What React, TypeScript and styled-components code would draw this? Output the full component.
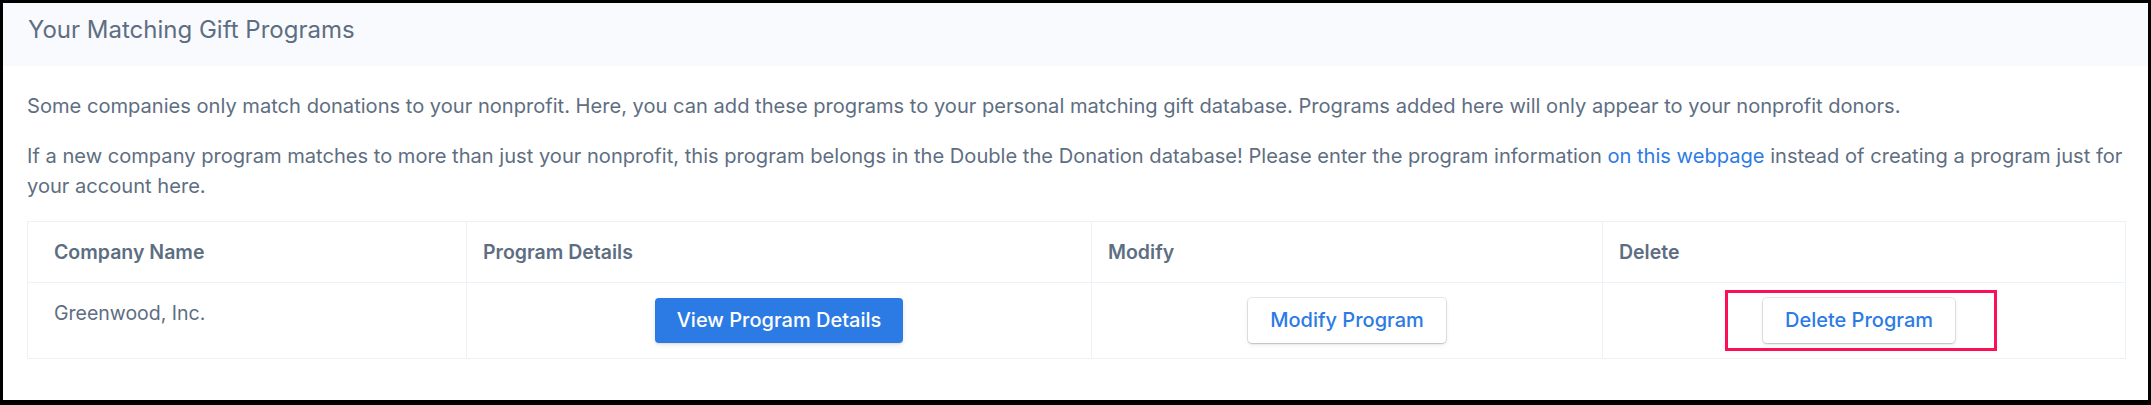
import * as React from "react";
import styled, { createGlobalStyle } from "styled-components";

const GlobalStyle = createGlobalStyle`
  html, body {
    margin: 0;
    padding: 0;
    background: #fff;
  }
  body {
    font-family: Inter, "Noto Sans", "Liberation Sans", sans-serif;
    color: #5e6e82;
  }
`;

const Frame = styled.div`
  width: 2151px;
  height: 405px;
  box-sizing: border-box;
  border: 3px solid #000;
  border-bottom-width: 5px;
  background: #fff;
`;

const CardHeader = styled.div`
  height: 63px;
  box-sizing: border-box;
  padding: 13px 25px 0;
  background: #f9fafd;
`;

const Title = styled.h5`
  margin: 0;
  font-size: 24px;
  line-height: 1.2;
  font-weight: 400;
  color: #5e6e82;
`;

const CardBody = styled.div`
  padding: 25px 24px 0;
`;

const Text = styled.p`
  margin: 0 0 20px;
  font-size: 20.1px;
  line-height: 30px;
  color: #5e6e82;
`;

const Link = styled.a`
  color: #2c7be5;
  text-decoration: none;
`;

const Table = styled.table`
  width: 100%;
  table-layout: fixed;
  border-collapse: collapse;
  border: 1px solid #edf2f9;
  font-size: 19.5px;
  line-height: 30px;
  color: #5e6e82;
`;

const Col = styled.col<{ $width: number }>`
  width: ${props => props.$width}px;
`;

const Header = styled.th`
  border: 1px solid #edf2f9;
  padding: 15px 16px;
  text-align: left;
  font-weight: 600;

  &:first-child {
    padding-left: 26px;
  }
  &:last-child {
    padding-right: 26px;
  }
`;

const Item = styled.td<{ $center?: boolean }>`
  border: 1px solid #edf2f9;
  padding: 15px 16px;
  vertical-align: top;
  text-align: ${props => (props.$center ? "center" : "left")};

  &:first-child {
    padding-left: 26px;
  }
  &:last-child {
    padding-right: 26px;
  }
`;

const Button = styled.button<{ $primary?: boolean }>`
  height: 45px;
  padding: 0 22px;
  border: none;
  border-radius: 4px;
  font-family: inherit;
  font-size: 20px;
  font-weight: 500;
  line-height: 45px;
  vertical-align: top;
  cursor: pointer;
  background: ${props => (props.$primary ? "#2c7be5" : "#fff")};
  color: ${props => (props.$primary ? "#fff" : "#2c7be5")};
  box-shadow: ${props =>
    props.$primary
      ? "0 2px 5px 0 rgba(43, 45, 80, 0.1), 0 1px 1.5px 0 rgba(0, 0, 0, 0.07)"
      : "0 0 0 1px rgba(43, 45, 80, 0.1), 0 2px 5px 0 rgba(43, 45, 80, 0.08), 0 1px 1.5px 0 rgba(0, 0, 0, 0.07), 0 1px 2px 0 rgba(0, 0, 0, 0.08)"};
`;

const Highlight = styled.span`
  position: relative;
  display: inline-block;
`;

const HighlightBox = styled.span`
  position: absolute;
  top: -8px;
  bottom: -8px;
  left: -38px;
  right: -42px;
  border: 3px solid #fd0f57;
  pointer-events: none;
`;

const headers = ["Company Name", "Program Details", "Modify", "Delete"];
const widths = [439, 625, 511, 523];

export default function App() {
  return (
    <>
      <GlobalStyle />
      <Frame>
        <CardHeader>
          <Title>Your Matching Gift Programs</Title>
        </CardHeader>
        <CardBody>
          <Text>
            Some companies only match donations to your nonprofit. Here, you can add these programs to your
            personal matching gift database. Programs added here will only appear to your nonprofit donors.
          </Text>
          <Text>
            If a new company program matches to more than just your nonprofit, this program belongs in the Double
            the Donation database! Please enter the program information <Link href="#">on this webpage</Link>{" "}
            instead of creating a program just for your account here.
          </Text>
          <Table>
            <colgroup>
              {widths.map((w, i) => (
                <Col key={i} $width={w} />
              ))}
            </colgroup>
            <thead>
              <tr>
                {headers.map(h => (
                  <Header key={h}>{h}</Header>
                ))}
              </tr>
            </thead>
            <tbody>
              <tr>
                <Item>Greenwood, Inc.</Item>
                <Item $center>
                  <Button $primary>View Program Details</Button>
                </Item>
                <Item $center>
                  <Button>Modify Program</Button>
                </Item>
                <Item $center>
                  <Highlight>
                    <Button>Delete Program</Button>
                    <HighlightBox />
                  </Highlight>
                </Item>
              </tr>
            </tbody>
          </Table>
        </CardBody>
      </Frame>
    </>
  );
}
